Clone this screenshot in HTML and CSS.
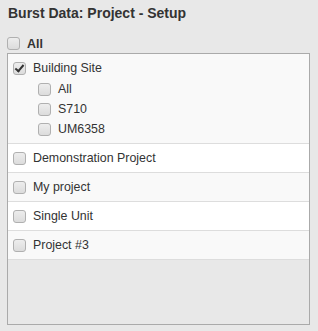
FILE: index.html
```html
<!DOCTYPE html>
<html>
  <head>
    <link rel="stylesheet" href="styles.css">
  </head>
  <body>
    <div class="burst-setup">
      <h1 class="heading">Burst Data: Project - Setup</h1>
      <label class="all-toggle"><input type="checkbox"> All</label>
      <div class="project-list">
        <div class="project">
          <label class="project-name"><input type="checkbox" checked> Building Site</label>
          <div class="units">
            <label class="unit"><input type="checkbox"> All</label>
            <label class="unit"><input type="checkbox"> S710</label>
            <label class="unit"><input type="checkbox"> UM6358</label>
          </div>
        </div>
        <div class="project">
          <label class="project-name"><input type="checkbox"> Demonstration Project</label>
        </div>
        <div class="project">
          <label class="project-name"><input type="checkbox"> My project</label>
        </div>
        <div class="project">
          <label class="project-name"><input type="checkbox"> Single Unit</label>
        </div>
        <div class="project">
          <label class="project-name"><input type="checkbox"> Project #3</label>
        </div>
      </div>
    </div>
  </body>
</html>
```

FILE: styles.css
```css
body {
  margin: 0;
  padding: 0;
  background-color: #e8e8e8;
  font-family: "Liberation Sans", Arial, sans-serif;
  font-size: 12.4px;
  color: #333;
}

.burst-setup {
  padding: 5px 8px 6px 7px;
}

.heading {
  font-size: 14px;
  font-weight: bold;
  margin: 0 0 0 1px;
  line-height: 16px;
  color: #333;
}

.all-toggle {
  display: flex;
  align-items: center;
  margin: 16px 0 3px 0;
  height: 13px;
  font-weight: bold;
  gap: 7px;
}

.project-list {
  border: 1px solid #aaa;
  height: 270px;
  background-color: #e8e8e8;
}

.project {
  background-color: #f9f9f9;
  border-bottom: 1px solid #ddd;
}

.project:nth-child(even) {
  background-color: #fff;
}

.project-name {
  display: flex;
  align-items: center;
  gap: 7px;
  height: 28px;
  padding-left: 5px;
}

.units {
  display: flex;
  flex-direction: column;
  padding: 0 0 4px 30px;
  margin-top: -3px;
}

.unit {
  display: flex;
  align-items: center;
  gap: 7px;
  height: 20px;
}

input[type="checkbox"] {
  appearance: none;
  -webkit-appearance: none;
  margin: 0;
  width: 13px;
  height: 13px;
  border: 1px solid #b0b0b0;
  border-radius: 3px;
  background: linear-gradient(#ededed, #dcdcdc);
  position: relative;
  flex: none;
}

input[type="checkbox"]:checked::after {
  content: "";
  position: absolute;
  left: 3px;
  top: 0px;
  width: 3px;
  height: 7px;
  border: solid #333;
  border-width: 0 2px 2px 0;
  transform: rotate(40deg);
}
```
